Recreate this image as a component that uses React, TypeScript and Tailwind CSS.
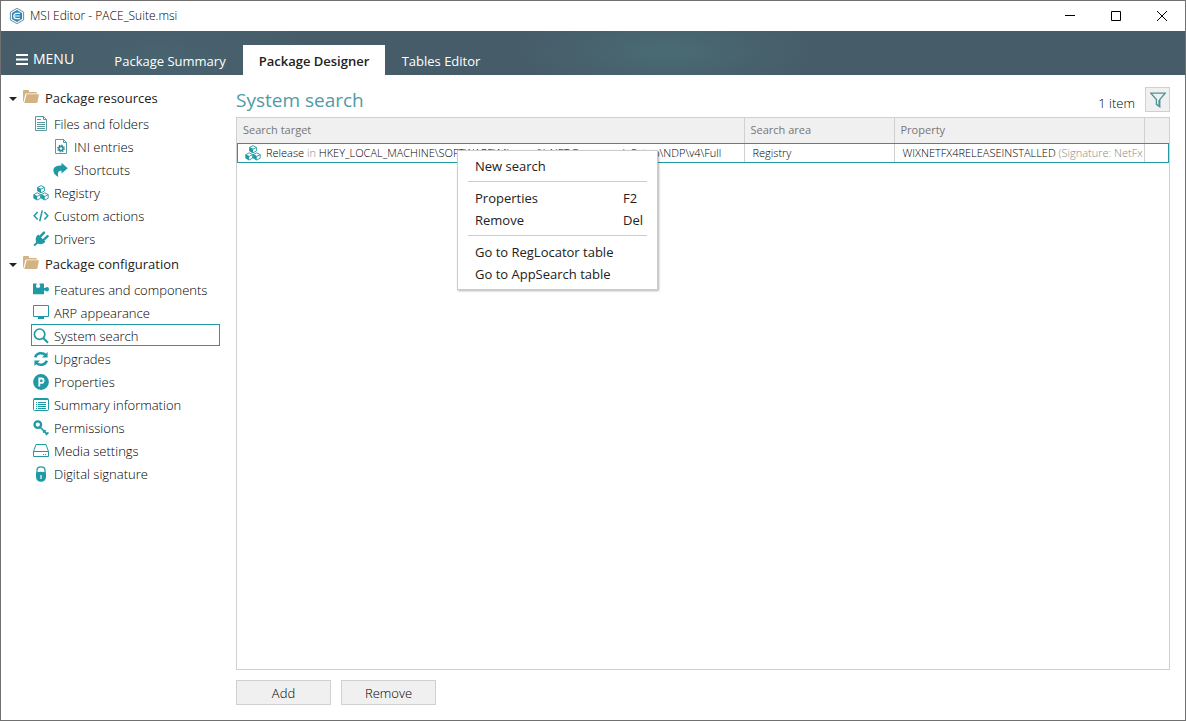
import type { ReactNode } from 'react';

interface TreeItem {
  label: string;
  icon: ReactNode;
  nested?: boolean;
  selected?: boolean;
}

interface TreeGroupProps {
  title: string;
  items: TreeItem[];
}

function LogoIcon() {
  return (
    <svg width="16" height="16" viewBox="0 0 16 16" aria-hidden="true">
      <path d="M8 .4 14.6 4v8L8 15.6 1.4 12V4z" fill="#fff" stroke="#6f8c9d" strokeWidth="1" />
      <path d="M8 2.1 13.1 5v6L8 13.9 2.9 11V5z" fill="#2a86b8" />
      <path d="M11 5.4H7.4a2.6 2.6 0 0 0 0 5.2H11M5.6 8H11" fill="none" stroke="#fff" strokeWidth="1.2" />
    </svg>
  );
}

function FolderIcon() {
  return (
    <svg width="16" height="14" viewBox="0 0 16 14" fill="#d3b284" aria-hidden="true">
      <path d="M0 1q0-1 1-1h4q1 0 1 1v1h7q1 0 1 1v.6H3.4q-1 0-1.2 1L.5 12Q0 12 0 11z" />
      <path d="M3.6 4.300H16L14.4 12.2q-.2 .8-1.100 .8H1.300z" />
    </svg>
  );
}

function FileIcon() {
  return (
    <svg width="16" height="16" viewBox="0 0 16 16" fill="none" stroke="#5b9a9d" aria-hidden="true">
      <path d="M2.5 .5h8l3 3v11h-11z M10.5 .5v3h3" />
      <path d="M4 3.5h4M4 6.5h8M4 8.5h8M4 10.5h8M4 12.5h8" />
    </svg>
  );
}

function FileGearIcon() {
  return (
    <svg width="16" height="16" viewBox="0 0 16 16" fill="none" stroke="#5b9a9d" aria-hidden="true">
      <path d="M2.5 .5h8l3 3v11h-11z M10.5 .5v3h3" />
      <circle cx="8" cy="9.5" r="2.1" stroke="#2b8d93" strokeWidth="1.6" />
      <circle cx="8" cy="9.5" r="3.3" stroke="#2b8d93" strokeWidth="1.3" strokeDasharray="1.3 1.29" />
    </svg>
  );
}

function ShareIcon() {
  return (
    <svg width="16" height="16" viewBox="0 0 16 16" fill="#1f9aa5" aria-hidden="true">
      <path d="M8.5 .8 14.8 6.2 8.500 11.6V8.800C5.800 8.600 4.400 9.800 5.200 15 2 13 .4 10.800 .4 8.400 .4 5 3.800 3.600 8.500 3.600z" />
    </svg>
  );
}

function CubesIcon() {
  return (
    <svg width="16" height="16" viewBox="0 0 16 16" aria-hidden="true">
      <g fill="#fff" stroke="#1f9aa5" strokeWidth=".9" strokeLinejoin="round">
        <path d="M8 .6 11.4 2.400V6L8 7.800 4.600 6V2.400z" />
        <path d="M4.200 7.800 7.600 9.600v3.600l-3.400 1.800L.8 13.200V9.600z" />
        <path d="M11.800 7.800 15.200 9.600v3.600l-3.400 1.800-3.400-1.800V9.600z" />
        <path d="M4.600 2.400 8 4.200l3.400-1.800M.8 9.600l3.400 1.800 3.400-1.800M8.400 9.600l3.400 1.800 3.400-1.800" fill="none" />
      </g>
      <path d="M8 4.200v3.600L4.600 6V2.400zM4.200 11.400v3.600L.8 13.200V9.600zM11.800 11.400v3.600l-3.400-1.800V9.600z" fill="#1f9aa5" />
    </svg>
  );
}

function CodeIcon() {
  return (
    <svg width="16" height="16" viewBox="0 0 16 16" fill="none" stroke="#1f9aa5" strokeWidth="1.5" aria-hidden="true">
      <path d="M4.600 4 1.200 7.800l3.400 3.800M11.400 4l3.400 3.800-3.400 3.800M9.300 2.400 6.700 13.200" />
    </svg>
  );
}

function PlugIcon() {
  return (
    <svg width="16" height="16" viewBox="0 0 16 16" fill="#1f9aa5" aria-hidden="true">
      <path d="M5.200 3.600 12.400 10.800C10.600 13.200 7.200 14 4.800 12.600L2.600 14.400Q1.600 15.200.8 14.700.4 13.800 1.300 13L3.200 11.200C2 8.800 2.800 5.400 5.200 3.600z" />
      <path d="M7.200 5.600 11 1.600M10.600 9 14.600 5.200" stroke="#1f9aa5" strokeWidth="2.4" strokeLinecap="round" />
    </svg>
  );
}

function PuzzleIcon() {
  return (
    <svg width="16" height="16" viewBox="0 0 16 16" fill="#1f9aa5" aria-hidden="true">
      <path d="M0 1.500h3.600v1.500q-.6.500-.6 1.200C3 5.300 4 5.800 5.100 5.800S7.200 5.300 7.200 4.200q0-.7-.6-1.200V1.500H11v4.500h1.300q.4-1 1.700-1 2 0 2 2.200t-2 2.200q-1.300 0-1.700-1H11v3.900H0z" />
    </svg>
  );
}

function MonitorIcon() {
  return (
    <svg width="16" height="16" viewBox="0 0 16 16" fill="none" stroke="#1f9aa5" aria-hidden="true">
      <path d="M.5 .5h15v11H.5z" />
      <path d="M5 13h6" strokeWidth="2" />
      <path d="M6.5 11.5h3v1.500h-3z" fill="#1f9aa5" />
    </svg>
  );
}

function SearchIcon() {
  return (
    <svg width="16" height="16" viewBox="0 0 16 16" fill="none" stroke="#1f9aa5" aria-hidden="true">
      <circle cx="6.600" cy="6.200" r="5.200" strokeWidth="1.700" />
      <path d="M10.400 10.200 15 14.800" strokeWidth="2" />
    </svg>
  );
}

function RefreshIcon() {
  return (
    <svg width="16" height="16" viewBox="0 0 16 16" aria-hidden="true">
      <path d="M2.200 6.400A6 5.600 0 0 1 12.600 4.200M13.800 9.600A6 5.600 0 0 1 3.400 11.800" fill="none" stroke="#1f9aa5" strokeWidth="2.500" />
      <path d="M14.600 1v5.600H9zM1.400 15V9.400H7z" fill="#1f9aa5" />
    </svg>
  );
}

function PropertyIcon() {
  return (
    <svg width="16" height="16" viewBox="0 0 16 16" aria-hidden="true">
      <circle cx="8" cy="8" r="7.900" fill="#1f9aa5" />
      <path d="M6.300 12.500V4.500H8.400a2.200 2.200 0 0 1 0 4.400H6.300" fill="none" stroke="#fff" strokeWidth="1.800" />
    </svg>
  );
}

function SummaryIcon() {
  return (
    <svg width="16" height="16" viewBox="0 0 16 16" fill="none" stroke="#1f9aa5" aria-hidden="true">
      <rect x=".5" y="1.500" width="15" height="12" rx="1" />
      <path d="M1 2.500h14M5 5.500h8M5 7.500h8M5 9.500h8M5 11.500h8M3 5.500h1M3 7.500h1M3 9.500h1M3 11.500h1" />
    </svg>
  );
}

function KeyIcon() {
  return (
    <svg width="16" height="16" viewBox="0 0 16 16" fill="none" stroke="#1f9aa5" aria-hidden="true">
      <circle cx="4.800" cy="4.600" r="3.300" strokeWidth="2.300" />
      <path d="M7 7 14.200 14.400M10.200 12.600 12.600 10.200M12.800 15 15.400 12.400" strokeWidth="1.700" />
    </svg>
  );
}

function DriveIcon() {
  return (
    <svg width="16" height="16" viewBox="0 0 16 16" fill="none" stroke="#1f9aa5" aria-hidden="true">
      <path d="M.5 8.500 3 1.500h10l2.500 7v5H.5zM.5 8.500h15M10 11.500h1M12 11.500h1" />
    </svg>
  );
}

function LockIcon() {
  return (
    <svg width="16" height="16" viewBox="0 0 16 16" aria-hidden="true">
      <path d="M4 7.500V4.200C4 1.800 5.800.8 8 .8s4 1 4 3.400v3.300" fill="none" stroke="#1f9aa5" strokeWidth="1.300" />
      <path d="M3 6.500q5-1.600 10 0V11c0 3-2 4.700-5 4.700S3 14 3 11z" fill="#1f9aa5" />
      <path d="M7.400 9h1.200v4H7.400z" fill="#fff" />
    </svg>
  );
}

function FunnelIcon() {
  return (
    <svg width="16" height="16" viewBox="0 0 16 16" fill="none" stroke="#4d9297" strokeWidth="1.300" aria-hidden="true">
      <path d="M.8 1.200h14.400L9.800 7.600V14.800L6.400 12.400V7.600z" />
      <path d="M9.200 8v6" strokeWidth="1.600" />
    </svg>
  );
}

const resources: TreeItem[] = [
  { label: 'Files and folders', icon: <FileIcon /> },
  { label: 'INI entries', icon: <FileGearIcon />, nested: true },
  { label: 'Shortcuts', icon: <ShareIcon />, nested: true },
  { label: 'Registry', icon: <CubesIcon /> },
  { label: 'Custom actions', icon: <CodeIcon /> },
  { label: 'Drivers', icon: <PlugIcon /> },
];

const configuration: TreeItem[] = [
  { label: 'Features and components', icon: <PuzzleIcon /> },
  { label: 'ARP appearance', icon: <MonitorIcon /> },
  { label: 'System search', icon: <SearchIcon />, selected: true },
  { label: 'Upgrades', icon: <RefreshIcon /> },
  { label: 'Properties', icon: <PropertyIcon /> },
  { label: 'Summary information', icon: <SummaryIcon /> },
  { label: 'Permissions', icon: <KeyIcon /> },
  { label: 'Media settings', icon: <DriveIcon /> },
  { label: 'Digital signature', icon: <LockIcon /> },
];

const menuGroups = [
  [{ label: 'New search', keys: '' }],
  [
    { label: 'Properties', keys: 'F2' },
    { label: 'Remove', keys: 'Del' },
  ],
  [
    { label: 'Go to RegLocator table', keys: '' },
    { label: 'Go to AppSearch table', keys: '' },
  ],
];

function TitleBar() {
  return (
    <header className="flex h-[30px] items-center bg-white pl-2">
      <LogoIcon />
      <h1 className="ml-1 flex-1 pl-px text-xs font-light text-black">MSI Editor - PACE_Suite.msi</h1>
      <button aria-label="Minimize" className="flex h-full w-[46px] items-center justify-center">
        <svg width="10" height="10" stroke="#000"><path d="M0 4.500h10" /></svg>
      </button>
      <button aria-label="Maximize" className="flex h-full w-[46px] items-center justify-center">
        <svg width="10" height="10" stroke="#000" fill="none"><path d="M.5 .5h9v9h-9z" /></svg>
      </button>
      <button aria-label="Close" className="flex h-full w-[46px] items-center justify-center">
        <svg width="10" height="10" stroke="#000"><path d="M0 0l10 10M10 0L0 10" /></svg>
      </button>
    </header>
  );
}

function TabBar() {
  return (
    <nav className="flex h-11 items-end bg-[#465c69] bg-[radial-gradient(ellipse_150px_44px_at_666px_20px,#4a6b73,transparent),radial-gradient(ellipse_160px_50px_at_160px_26px,#48636f,transparent)] text-[13px] text-white">
      <button className="flex h-8 w-24 items-center gap-[5px] pl-[15px] text-sm">
        <svg width="12" height="11" stroke="#fff" strokeWidth="2" aria-hidden="true">
          <path d="M0 1h12M0 5.500h12M0 10h12" />
        </svg>
        MENU
      </button>
      <a href="#summary" className="flex h-[30px] w-[146px] items-center justify-center pt-[3px]">Package Summary</a>
      <a href="#designer" className="flex h-[30px] w-[142px] items-center justify-center bg-white pt-[3px] font-semibold text-[#222]">
        Package Designer
      </a>
      <a href="#tables" className="flex h-[30px] w-28 items-center justify-center pt-[3px]">Tables Editor</a>
    </nav>
  );
}

function TreeGroup({ title, items }: TreeGroupProps) {
  return (
    <section>
      <button className="flex h-7 w-full items-center pt-0.5 pl-2 text-left text-[13px] text-[#222]">
        <svg width="8" height="4" fill="#222" aria-hidden="true"><path d="M0 0h8L4 4z" /></svg>
        <span className="mr-1.5 ml-1.5 pb-1"><FolderIcon /></span>
        {title}
      </button>
      <ul className="pr-4 pl-[30px]">
        {items.map((item) => (
          <li key={item.label} className={item.nested ? 'pb-px pl-5' : 'pb-px'}>
            <a
              href="#item"
              className={`flex h-[22px] items-center gap-[5px] border pt-0.5 pl-px text-[13px] font-light text-black ${item.selected ? 'border-[#1f9aa5]' : 'border-transparent'}`}
            >
              {item.icon}
              <span className="pt-0.5">{item.label}</span>
            </a>
          </li>
        ))}
      </ul>
    </section>
  );
}

function ContextMenu() {
  return (
    <div role="menu" className="absolute top-8 left-[220px] w-[201px] border border-[#ccc] bg-white px-2.5 pt-[5px] pb-[3px] text-[13px] text-[#222] shadow-[1px_1px_2px_rgba(0,0,0,0.3)]">
      {menuGroups.map((group, i) => (
        <div key={i} className={i > 0 ? 'mt-[3px] border-t border-t-[#ccc] pt-1.5' : ''}>
          {group.map((entry) => (
            <button key={entry.label} role="menuitem" className="flex h-[22px] w-full items-center pl-[7px] text-left">
              <span className="flex-1">{entry.label}</span>
              {entry.keys && <span className="w-6">{entry.keys}</span>}
            </button>
          ))}
        </div>
      ))}
    </div>
  );
}

function SearchTable() {
  return (
    <div className="relative flex-1 border border-[#d0d0d0]">
      <table className="w-full table-fixed border-collapse text-left text-[11px]">
        <colgroup>
          <col />
          <col className="w-[150px]" />
          <col className="w-[250px]" />
          <col className="w-[25px]" />
        </colgroup>
        <thead className="bg-[#f0f0f0] text-[#777]">
          <tr className="h-[25px]">
            <th className="border-r border-[#d0d0d0] px-1.5 font-medium">Search target</th>
            <th className="border-r border-[#d0d0d0] px-1.5 font-medium">Search area</th>
            <th className="border-r border-[#d0d0d0] px-1.5 font-medium">Property</th>
            <th></th>
          </tr>
        </thead>
        <tbody>
          <tr className="h-5 font-light whitespace-nowrap text-black outline -outline-offset-1 outline-[#1f9aa5]">
            <td className="border-r border-[#d0d0d0] pl-2">
              <div className="flex h-[18px] items-center gap-[5px]">
                <CubesIcon />
                <span>
                  Release <span className="text-[#888]">in</span> HKEY_LOCAL_MACHINE\SOFTWARE\Microsoft\.NET Framework Setup\NDP\v4\Full
                </span>
              </div>
            </td>
            <td className="border-r border-[#d0d0d0] px-2">Registry</td>
            <td className="border-r border-[#d0d0d0] pl-2">
              WIXNETFX4RELEASEINSTALLED <span className="text-[#888]">(Signature: NetFx</span>
            </td>
            <td></td>
          </tr>
        </tbody>
      </table>
      <ContextMenu />
    </div>
  );
}

export default function App() {
  return (
    <div className="flex min-h-screen flex-col border border-[#707070] bg-white font-['Open_Sans',sans-serif]">
      <TitleBar />
      <TabBar />
      <div className="flex flex-1">
        <aside className="w-[235px] shrink-0 pt-[9px]">
          <TreeGroup title="Package resources" items={resources} />
          <TreeGroup title="Package configuration" items={configuration} />
        </aside>
        <main className="flex min-w-0 flex-1 flex-col pr-[15px] pb-[15px]">
          <div className="flex h-[42px] items-start pt-3">
            <h2 className="flex-1 text-[19px] leading-[26px] text-[#4f9ba8]">System search</h2>
            <span className="mr-2.5 pt-1.5 text-[13px] leading-5 font-light text-black">1 item</span>
            <button aria-label="Filter" className="flex h-[25px] w-[25px] items-center justify-center border border-[#d0d0d0] bg-[#f0f0f0]">
              <FunnelIcon />
            </button>
          </div>
          <SearchTable />
          <div className="mt-2.5 flex gap-2.5 text-[13px] font-light text-black">
            <button className="h-[25px] w-[95px] border border-[#d0d0d0] bg-[#f0f0f0] pt-0.5">Add</button>
            <button className="h-[25px] w-[95px] border border-[#d0d0d0] bg-[#f0f0f0] pt-0.5">Remove</button>
          </div>
        </main>
      </div>
    </div>
  );
}
